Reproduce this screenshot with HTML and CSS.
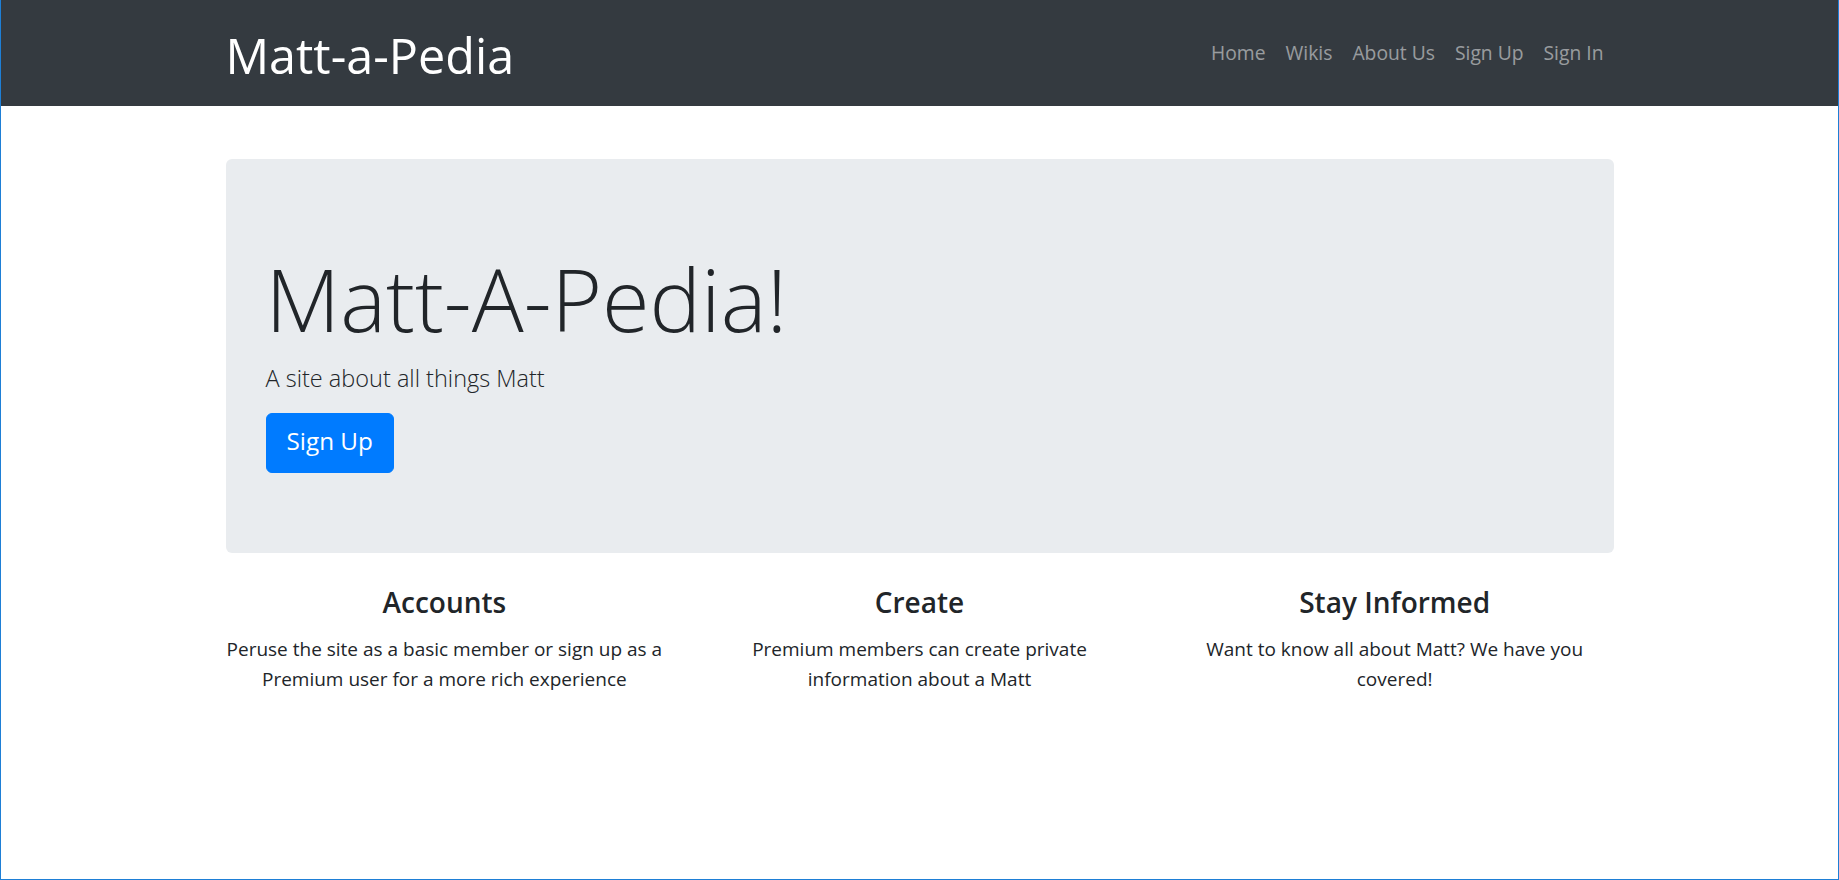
FILE: index.html
```html
<!DOCTYPE html>
<html lang="en">
<head>
<meta charset="utf-8">
<title>Matt-a-Pedia</title>
<link rel="stylesheet" href="styles.css">
</head>
<body>
<div class="frame">
  <nav class="navbar">
    <div class="container nav-inner">
      <a class="brand" href="#">Matt-a-Pedia</a>
      <ul class="nav-links">
        <li><a href="#">Home</a></li>
        <li><a href="#">Wikis</a></li>
        <li><a href="#">About Us</a></li>
        <li><a href="#">Sign Up</a></li>
        <li><a href="#">Sign In</a></li>
      </ul>
    </div>
  </nav>
  <main class="container main">
    <section class="jumbotron">
      <h1 class="display">Matt-A-Pedia!</h1>
      <p class="lead">A site about all things Matt</p>
      <a class="btn" href="#">Sign Up</a>
    </section>
    <section class="features">
      <div class="feature">
        <h4>Accounts</h4>
        <p>Peruse the site as a basic member or sign up as a Premium user for a more rich experience</p>
      </div>
      <div class="feature">
        <h4>Create</h4>
        <p>Premium members can create private information about a Matt</p>
      </div>
      <div class="feature">
        <h4>Stay Informed</h4>
        <p>Want to know all about Matt? We have you covered!</p>
      </div>
    </section>
  </main>
</div>
</body>
</html>
```

FILE: styles.css
```css
* { box-sizing: border-box; }
html, body { margin: 0; padding: 0; }
body {
  font-family: "Open Sans", "Noto Sans", sans-serif;
  font-size: 20px;
  line-height: 1.5;
  color: #212529;
  background: #fff;
}
.frame {
  min-height: 100vh;
  border: 1px solid #1e7fd6;
  border-top: none;
}
.container {
  width: 1388px;
  margin: 0 auto;
}
.navbar {
  background: #343a40;
  height: 106px;
}
.nav-inner {
  height: 100%;
  display: flex;
  align-items: center;
  justify-content: space-between;
}
.brand {
  color: #fff;
  text-decoration: none;
  font-size: 48.5px;
  line-height: 1;
  margin-top: 4px;
  font-weight: 400;
}
.nav-links {
  list-style: none;
  display: flex;
  margin: 0;
  padding: 0;
  margin-top: 1px;
}
.nav-links a {
  display: block;
  padding: 0 10px;
  color: rgba(255,255,255,.5);
  text-decoration: none;
  font-size: 19.3px;
}
.main { padding-top: 53px; }
.jumbotron {
  background: #e9ecef;
  border-radius: 6px;
  padding: 88px 40px 0;
  height: 394px;
}
.display {
  font-size: 86.5px;
  font-weight: 300;
  line-height: 1.2;
  margin: 0 0 10px;
}
.lead {
  font-size: 23.5px;
  font-weight: 300;
  line-height: 1.5;
  margin: 0 0 17px;
}
.btn {
  display: inline-block;
  background: #007bff;
  color: #fff;
  text-decoration: none;
  font-size: 24.3px;
  line-height: 1.5;
  padding: 9px 20px;
  border: 1px solid #007bff;
  border-radius: 6px;
  height: 60px;
}
.features {
  display: grid;
  grid-template-columns: repeat(3, 1fr);
  column-gap: 37.5px;
  margin-top: 33px;
  text-align: center;
}
.feature h4 {
  font-size: 28px;
  font-weight: 600;
  line-height: 1.2;
  margin: 0 0 14px;
}
.feature p {
  margin: 0;
  font-size: 19px;
  line-height: 30px;
}
```
